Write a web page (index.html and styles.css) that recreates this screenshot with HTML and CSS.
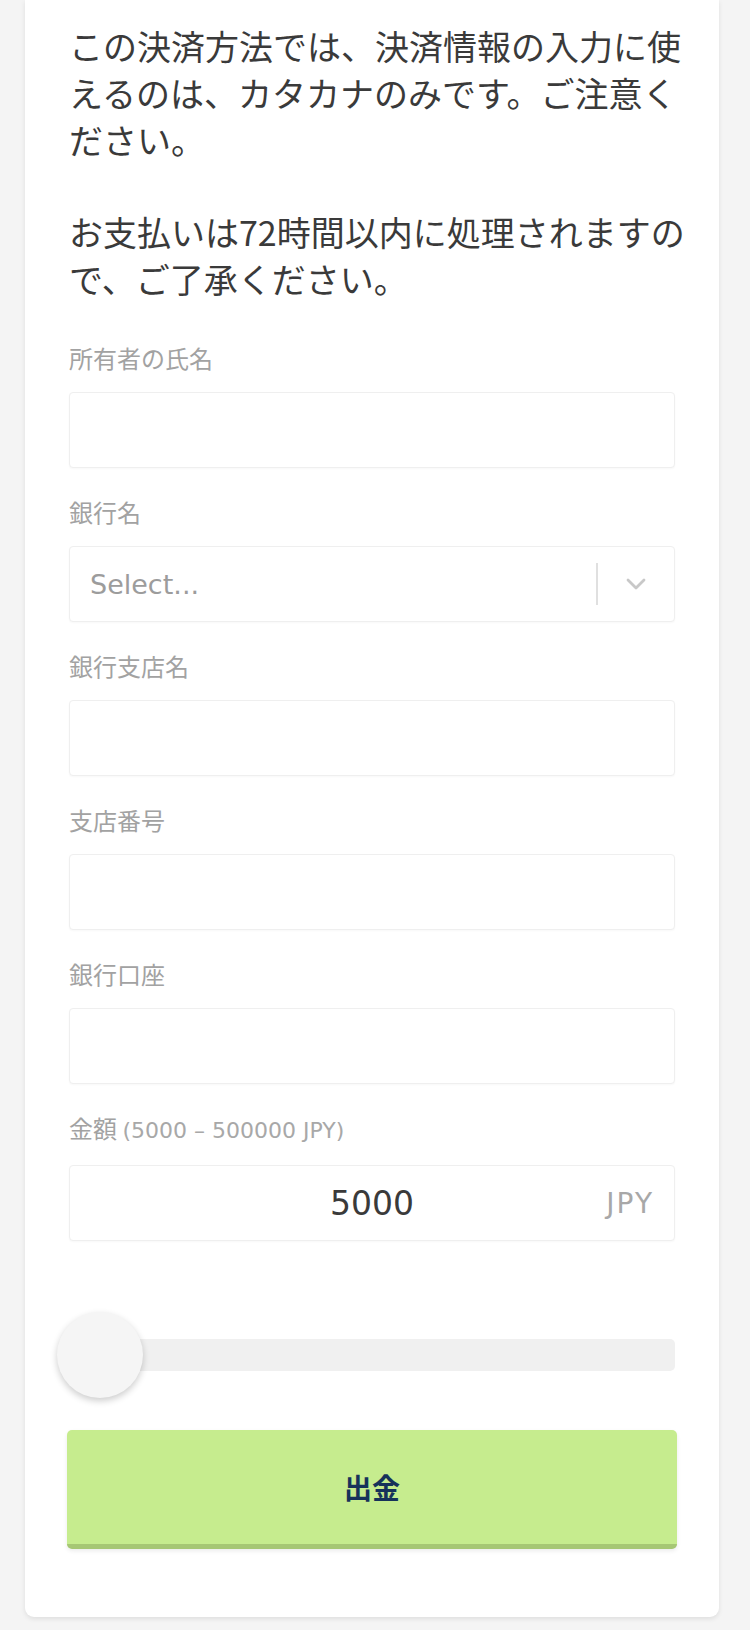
FILE: index.html
```html
<!DOCTYPE html>
<html lang="ja">
<head>
<meta charset="utf-8">
<title>出金</title>
<link rel="stylesheet" href="styles.css">
</head>
<body>
<div class="page">
  <div class="card">
    <p class="note">この決済方法では、決済情報の入力に使えるのは、カタカナのみです。ご注意ください。</p>
    <p class="note note-second">お支払いは72時間以内に処理されますので、ご了承ください。</p>

    <div class="field">
      <label class="field-label">所有者の氏名</label>
      <input class="field-input" type="text">
    </div>

    <div class="field">
      <label class="field-label">銀行名</label>
      <div class="select">
        <span class="select-value">Select...</span>
        <span class="select-sep"></span>
        <span class="select-indicator">
          <svg width="20" height="12" viewBox="0 0 20 12"><path d="M2 2 L10 10 L18 2" fill="none" stroke="#c8c8c8" stroke-width="2.8" stroke-linecap="round" stroke-linejoin="round"/></svg>
        </span>
      </div>
    </div>

    <div class="field">
      <label class="field-label">銀行支店名</label>
      <input class="field-input" type="text">
    </div>

    <div class="field">
      <label class="field-label">支店番号</label>
      <input class="field-input" type="text">
    </div>

    <div class="field">
      <label class="field-label">銀行口座</label>
      <input class="field-input" type="text">
    </div>

    <div class="field field-amount">
      <label class="field-label">金額 <span class="label-range">(5000 – 500000 JPY)</span></label>
      <div class="amount">
        <span class="amount-spacer"></span>
        <span class="amount-value">5000</span>
        <span class="amount-currency">JPY</span>
      </div>
    </div>

    <div class="slider">
      <div class="slider-track"></div>
      <div class="slider-thumb"></div>
    </div>

    <button class="submit" type="button">出金</button>
  </div>
</div>
</body>
</html>
```

FILE: styles.css
```css
html, body {
  margin: 0;
  padding: 0;
}

body {
  background: #f4f4f4;
  font-family: "Noto Sans CJK JP", "Noto Sans", sans-serif;
  width: 750px;
  height: 1630px;
  overflow: hidden;
}

.page {
  padding: 0 31px 0 25px;
}

.card {
  background: #ffffff;
  border-radius: 0 0 9px 9px;
  box-shadow: 0 2px 5px rgba(0, 0, 0, 0.09);
  padding: 22px 44px 68px 44px;
  display: flex;
  flex-direction: column;
}

.note {
  margin: 0 -22px 0 0;
  font-size: 34px;
  line-height: 47px;
  color: #3a3a3a;
}

.note-second {
  margin-top: 45px;
}

.field {
  display: flex;
  flex-direction: column;
  margin-top: 28px;
}

.note-second + .field {
  margin-top: 40px;
}

.field-label {
  font-size: 24px;
  line-height: 32px;
  color: #a2a2a2;
  margin-bottom: 18px;
}

.label-range {
  font-family: "DejaVu Sans", sans-serif;
  font-size: 22px;
  color: #a8a8a8;
}

.field-input {
  box-sizing: border-box;
  height: 76px;
  width: 100%;
  margin: 0;
  border: 1px solid #efefef;
  border-radius: 4px;
  background: #ffffff;
  box-shadow: 0 1px 2px rgba(0, 0, 0, 0.03);
  outline: none;
}

.select {
  box-sizing: border-box;
  height: 76px;
  display: flex;
  align-items: stretch;
  border: 1px solid #efefef;
  border-radius: 4px;
  background: #ffffff;
  box-shadow: 0 1px 2px rgba(0, 0, 0, 0.03);
}

.select-value {
  flex: 1;
  display: flex;
  align-items: center;
  padding-left: 20px;
  font-family: "DejaVu Sans", sans-serif;
  font-size: 27px;
  color: #9c9c9c;
}

.select-sep {
  width: 2px;
  background: #e0e0e0;
  margin: 16px 0;
}

.select-indicator {
  width: 76px;
  display: flex;
  align-items: center;
  justify-content: center;
}

.amount {
  box-sizing: border-box;
  height: 76px;
  display: grid;
  grid-template-columns: 1fr auto 1fr;
  align-items: center;
  border: 1px solid #efefef;
  border-radius: 4px;
  background: #ffffff;
  box-shadow: 0 1px 2px rgba(0, 0, 0, 0.03);
  padding-right: 20px;
  padding-left: 20px;
}

.amount-value {
  font-family: "DejaVu Sans", sans-serif;
  font-size: 33px;
  color: #3a3a3a;
}

.amount-currency {
  justify-self: end;
  font-family: "DejaVu Sans", sans-serif;
  font-size: 28px;
  letter-spacing: 2px;
  color: #a8a8a8;
}

.slider {
  position: relative;
  height: 87px;
  margin-top: 71px;
}

.slider-track {
  margin-top: 27px;
  height: 32px;
  border-radius: 5px;
  background: #f0f0f0;
}

.slider-thumb {
  position: absolute;
  left: -12px;
  top: 0;
  width: 86px;
  height: 86px;
  border-radius: 50%;
  background: #f5f5f5;
  box-shadow: 0 3px 7px rgba(0, 0, 0, 0.2);
}

.submit {
  margin: 31px -2px 0 -2px;
  height: 119px;
  border: none;
  border-bottom: 5px solid #a6c774;
  border-radius: 5px;
  background: #c6ec8e;
  box-shadow: 0 2px 4px rgba(0, 0, 0, 0.08);
  font-family: "Noto Sans CJK JP", sans-serif;
  font-size: 28px;
  font-weight: 700;
  color: #16325a;
  padding: 0;
}
```
